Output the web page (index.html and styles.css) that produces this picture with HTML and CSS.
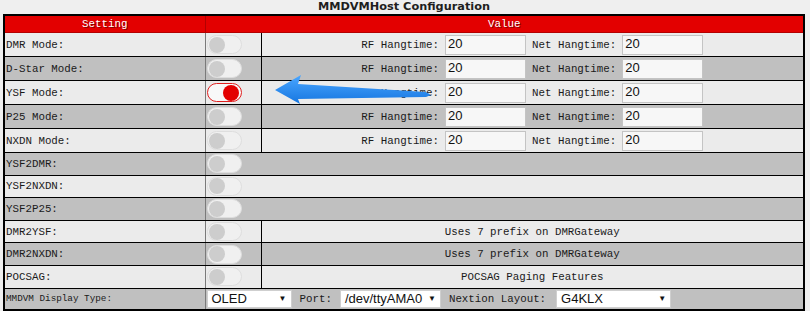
FILE: index.html
```html
<!DOCTYPE html>
<html>
<head>
<meta charset="utf-8">
<title>MMDVMHost Configuration</title>
<link rel="stylesheet" href="styles.css">
</head>
<body>
<div class="page">
  <h2 class="title">MMDVMHost Configuration</h2>
  <table class="cfg">
    <colgroup><col class="c1"><col class="c2"><col class="c3"></colgroup>
    <tr class="head"><th>Setting</th><th colspan="2">Value</th></tr>
    <tr class="tall"><td class="lbl">DMR Mode:</td><td class="tg"><span class="toggle"><span class="knob"></span></span></td><td><div class="hangs"><span>RF Hangtime:</span><span class="inp">20</span><span>Net Hangtime:</span><span class="inp">20</span></div></td></tr>
    <tr class="tall"><td class="lbl">D-Star Mode:</td><td class="tg"><span class="toggle"><span class="knob"></span></span></td><td><div class="hangs"><span>RF Hangtime:</span><span class="inp">20</span><span>Net Hangtime:</span><span class="inp">20</span></div></td></tr>
    <tr class="tall"><td class="lbl">YSF Mode:</td><td class="tg"><span class="toggle on"><span class="knob"></span></span></td><td><div class="hangs"><span>RF Hangtime:</span><span class="inp">20</span><span>Net Hangtime:</span><span class="inp">20</span></div></td></tr>
    <tr class="tall"><td class="lbl">P25 Mode:</td><td class="tg"><span class="toggle"><span class="knob"></span></span></td><td><div class="hangs"><span>RF Hangtime:</span><span class="inp">20</span><span>Net Hangtime:</span><span class="inp">20</span></div></td></tr>
    <tr class="tall"><td class="lbl">NXDN Mode:</td><td class="tg"><span class="toggle"><span class="knob"></span></span></td><td><div class="hangs"><span>RF Hangtime:</span><span class="inp">20</span><span>Net Hangtime:</span><span class="inp">20</span></div></td></tr>
    <tr class="short"><td class="lbl">YSF2DMR:</td><td class="tg" colspan="2"><span class="toggle"><span class="knob"></span></span></td></tr>
    <tr class="short"><td class="lbl">YSF2NXDN:</td><td class="tg" colspan="2"><span class="toggle"><span class="knob"></span></span></td></tr>
    <tr class="short"><td class="lbl">YSF2P25:</td><td class="tg" colspan="2"><span class="toggle"><span class="knob"></span></span></td></tr>
    <tr class="short"><td class="lbl">DMR2YSF:</td><td class="tg"><span class="toggle"><span class="knob"></span></span></td><td class="note">Uses 7 prefix on DMRGateway</td></tr>
    <tr class="short"><td class="lbl">DMR2NXDN:</td><td class="tg"><span class="toggle"><span class="knob"></span></span></td><td class="note">Uses 7 prefix on DMRGateway</td></tr>
    <tr class="short"><td class="lbl">POCSAG:</td><td class="tg"><span class="toggle"><span class="knob"></span></span></td><td class="note">POCSAG Paging Features</td></tr>
    <tr class="disp"><td class="lbl small">MMDVM Display Type:</td><td colspan="2"><div class="dispcell"><span class="sel w1"><span>OLED</span><span class="arr">▼</span></span><span>Port:</span><span class="sel w2"><span>/dev/ttyAMA0</span><span class="arr">▼</span></span><span>Nextion Layout:</span><span class="sel w3"><span>G4KLX</span><span class="arr">▼</span></span></div></td></tr>
  </table>
  <svg class="pointer" width="170" height="40" viewBox="0 0 170 40">
    <defs>
      <linearGradient id="ag" x1="0" y1="0" x2="0" y2="1">
        <stop offset="0" stop-color="#4aa6ff"/>
        <stop offset="1" stop-color="#1676e0"/>
      </linearGradient>
    </defs>
    <polygon points="5,20 31,5 28,14 156,22 161,25 156,27 28,29 30,34" fill="url(#ag)"/>
  </svg>
</div>
</body>
</html>
```

FILE: styles.css
```css
html, body {
  margin: 0;
  padding: 0;
  background: #efefef;
}

.page {
  position: relative;
  width: 802px;
  margin-left: 3px;
}

.title {
  margin: 0;
  height: 14px;
  line-height: 14px;
  font: bold 11.3px "DejaVu Sans", Verdana, sans-serif;
  text-align: center;
  color: #1e1e1e;
}

.cfg {
  width: 802px;
  border-collapse: collapse;
  border: 2px solid #000;
  table-layout: fixed;
  font-family: "Liberation Mono", monospace;
  font-size: 10.8px;
  color: #1a1a1a;
}

col.c1 { width: 201px; }
col.c2 { width: 56px; }

.cfg th {
  background: #e30000;
  color: #fff;
  font-weight: normal;
  height: 16px;
  padding: 0;
  border: 1px solid #b30000;
  text-shadow: 1px 1px #8b0000;
  text-align: center;
}

.cfg td {
  padding: 0 1px;
  border: 1px solid #000;
  vertical-align: middle;
}

.cfg tr:nth-child(even) td { background: #ebebeb; }
.cfg tr:nth-child(odd) td { background: #c0c0c0; }

.cfg td.lbl {
  border-right-color: #7a7a7a;
  text-align: left;
}

.cfg td.small { font-size: 9.3px; }

tr.tall td { height: 23px; }
tr.short td { height: 21.6px; }
tr.disp td { height: 20px; }

.toggle {
  display: flex;
  align-items: center;
  box-sizing: border-box;
  width: 35px;
  height: 19px;
  padding: 0 1px;
  border: 1px solid #dedede;
  border-radius: 10px;
  background: #f0f0f0;
}

.knob {
  width: 16px;
  height: 16px;
  border-radius: 50%;
  background: #cdcdcd;
}

.toggle.on {
  justify-content: flex-end;
  border-color: #e02020;
  background: #f8f8f8;
  padding: 0 2px;
}

.toggle.on .knob { background: #e30000; }

.hangs {
  display: flex;
  justify-content: center;
  align-items: center;
  gap: 6px;
}

.inp {
  box-sizing: border-box;
  width: 81px;
  height: 20px;
  line-height: 18px;
  padding-left: 2px;
  border: 1px solid #c4c4c4;
  background: #f7f7f7;
  font: 13px "Liberation Sans", Arial, sans-serif;
  color: #111;
}

.note { text-align: center; }

.dispcell {
  display: flex;
  align-items: center;
  gap: 8px;
}

.sel {
  box-sizing: border-box;
  display: flex;
  justify-content: space-between;
  align-items: center;
  height: 18px;
  padding: 0 4px 0 4px;
  border: 1px solid #cfcfcf;
  background: #fff;
  font: 13px "Liberation Sans", Arial, sans-serif;
  color: #111;
}

.sel .arr { font-size: 8px; }

.w1 { width: 85px; }
.w2 { width: 101px; }
.w3 { width: 115px; margin-left: 2px; }

.pointer {
  position: absolute;
  left: 267px;
  top: 70px;
}
```
